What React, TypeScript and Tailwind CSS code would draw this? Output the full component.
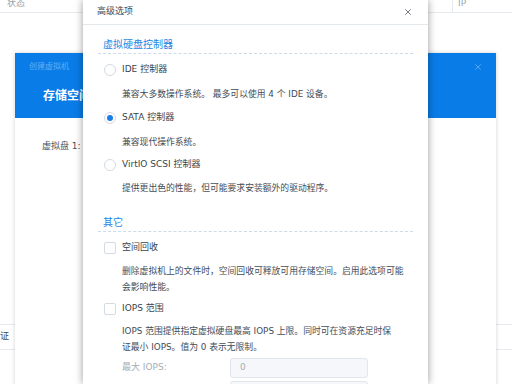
import { X } from 'lucide-react';

const font = "font-['DejaVu_Sans','Noto_Sans_CJK_SC',sans-serif]";

function Radio({ checked }: { checked?: boolean }) {
  return (
    <span className="w-[12px] h-[12px] rounded-full border border-[#d3dbe4] bg-white flex items-center justify-center shrink-0">
      {checked && <span className="w-[6px] h-[6px] rounded-full bg-[#1a7de8]" />}
    </span>
  );
}

function Checkbox() {
  return <span className="w-[12px] h-[12px] rounded-[2px] border border-[#d3dbe4] bg-white shrink-0" />;
}

function SectionTitle({ children, className }: { children: string; className?: string }) {
  return (
    <div className={`h-[18px] border-b border-dashed border-[#cadbea] pl-[5px] flex items-center text-[10px] text-[#1e86e3] ${className ?? ''}`}>
      {children}
    </div>
  );
}

function Option({ control, label, className }: { control: React.ReactNode; label: string; className?: string }) {
  return (
    <div className={`h-[16px] pl-[6px] flex items-center gap-[6px] text-[9px] text-[#3a444e] ${className ?? ''}`}>
      {control}
      <span>{label}</span>
    </div>
  );
}

function Desc({ children, className }: { children: React.ReactNode; className?: string }) {
  return <p className={`pl-[24px] pr-[2px] text-[8.8px] leading-[16px] text-[#434d57] whitespace-nowrap ${className ?? ''}`}>{children}</p>;
}

export default function App() {
  return (
    <div className={`relative w-[512px] h-[384px] overflow-hidden bg-white ${font}`}>
      {/* page behind */}
      <div className="flex flex-col h-full">
        <div className="h-[13px] shrink-0 border-b border-[#e6eaee] flex text-[9px] text-[#9aa3ab] overflow-hidden">
          <span className="pl-[7px] -mt-[5px] leading-[16px]">状态</span>
          <div className="ml-auto w-[60px] border-l border-[#e6eaee] pl-[5px] -mt-[5px] leading-[16px]">IP</div>
        </div>
        <div className="mt-[311px] h-[26px] shrink-0 border-y border-[#e6eaee] flex items-center text-[9px] text-[#3e4852]">
          <span>证</span>
        </div>
      </div>

      {/* create VM dialog */}
      <div className="absolute left-[15px] top-[53px] w-[481px] h-[340px] bg-white shadow-[0_0_4px_rgba(0,0,0,0.18)]">
        <div className="h-[65px] bg-[#0a7ce8] px-[14px] flex flex-col">
          <div className="h-[28px] flex items-center justify-between text-[8px] text-[#5fb0f5]">
            <span>创建虚拟机</span>
            <X className="w-[10px] h-[10px] text-[#5fb0f5] mr-[-1px]" strokeWidth={2} />
          </div>
          <div className="pl-[14px] mt-[7px] text-[12px] font-bold text-white leading-[16px]">存储空间</div>
        </div>
        <div className="pl-[27px] mt-[20px] text-[9px] text-[#47515b] leading-[16px]">虚拟盘 1:</div>
      </div>

      {/* advanced options dialog */}
      <div className="absolute left-[83px] top-0 w-[345px] h-[384px] bg-white shadow-[0_0_8px_rgba(0,0,0,0.4)] overflow-hidden">
        <div className="h-[25px] border-b border-[#e3e8ed] px-[14px] flex items-center justify-between text-[9px] text-[#3e4852]">
          <span>高级选项</span>
          <X className="w-[10px] h-[10px] text-[#5a636c] mr-[1px]" strokeWidth={2} />
        </div>
        <div className="px-[15px] flex flex-col">
          <SectionTitle className="mt-[11px]">虚拟硬盘控制器</SectionTitle>
          <Option className="mt-[8px]" control={<Radio />} label="IDE 控制器" />
          <Desc className="mt-[8px]">兼容大多数操作系统。 最多可以使用 4 个 IDE 设备。</Desc>
          <Option className="mt-[8px]" control={<Radio checked />} label="SATA 控制器" />
          <Desc className="mt-[8px]">兼容现代操作系统。</Desc>
          <Option className="mt-[7px]" control={<Radio />} label="VirtIO SCSI 控制器" />
          <Desc className="mt-[7px]">提供更出色的性能，但可能要求安装额外的驱动程序。</Desc>

          <SectionTitle className="mt-[18px]">其它</SectionTitle>
          <Option className="mt-[8px]" control={<Checkbox />} label="空间回收" />
          <Desc className="mt-[7px]">
            删除虚拟机上的文件时，空间回收可释放可用存储空间。启用此选项可能
            <br />
            会影响性能。
          </Desc>
          <Option className="mt-[6px]" control={<Checkbox />} label="IOPS 范围" />
          <Desc className="mt-[6px]">
            IOPS 范围提供指定虚拟硬盘最高 IOPS 上限。同时可在资源充足时保
            <br />
            证最小 IOPS。值为 0 表示无限制。
          </Desc>
          <div className="mt-[3px] pl-[24px] flex items-center text-[9px]">
            <span className="w-[108px] text-[#a5adb5]">最大 IOPS:</span>
            <div className="w-[138px] h-[20px] rounded-[3px] border border-[#e0e6ec] bg-[#f5f7fa] pl-[9px] flex items-center text-[#a5adb5]">0</div>
          </div>
          <div className="mt-[3px] ml-[132px] w-[138px] h-[20px] shrink-0 rounded-[3px] border border-[#e0e6ec] bg-[#f5f7fa]" />
        </div>
      </div>
    </div>
  );
}
